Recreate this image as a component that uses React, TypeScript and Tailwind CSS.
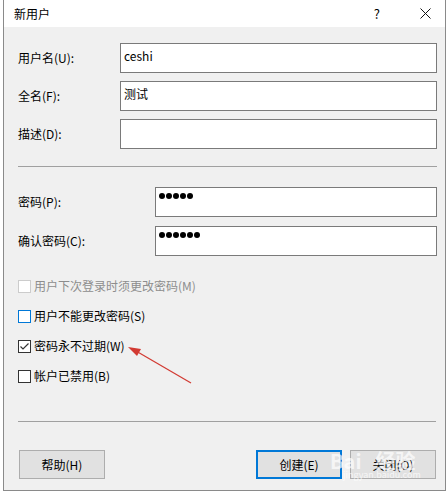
const font = { fontFamily: '"Noto Sans CJK SC", "Liberation Sans", sans-serif' }

function Field({ label, labelWidth, value, password }: { label: string; labelWidth: string; value?: string; password?: number }) {
  return (
    <div className="flex items-center h-[30px]">
      <div className={`${labelWidth} text-[12px] text-black leading-none`}>{label}</div>
      <div className="flex-1 h-[30px] border border-[#7a7a7a] bg-white px-[3px] pt-[4px] text-[12px] leading-[16px] text-black">
        {value}
        {password ? (
          <div className="flex gap-[1px] pt-[1px]">
            {Array.from({ length: password }).map((_, i) => (
              <span key={i} className="w-[6px] h-[6px] rounded-full bg-black" />
            ))}
          </div>
        ) : null}
      </div>
    </div>
  )
}

function Check({ label, checked, disabled, focus }: { label: string; checked?: boolean; disabled?: boolean; focus?: boolean }) {
  const box = disabled ? "border-[#cccccc]" : focus ? "border-[#0078d7]" : "border-[#333333]"
  return (
    <div className="flex items-center h-[16px]">
      <div className={`w-[13px] h-[13px] border ${box} bg-white flex items-center justify-center`}>
        {checked && (
          <svg width="11" height="11" viewBox="0 0 11 11">
            <path d="M1.5 5.5 L4 8 L9.5 2.5" fill="none" stroke="#333" strokeWidth="1.2" />
          </svg>
        )}
      </div>
      <span className={`ml-[3px] text-[12px] leading-none ${disabled ? "text-[#8d8d8d]" : "text-black"}`}>{label}</span>
    </div>
  )
}

export default function App() {
  return (
    <div className="relative w-[448px] h-[493px] bg-white overflow-hidden" style={font}>
      <div className="ml-[3px] w-[443px] h-[491px] border-l border-r border-b border-[#8a8a8a] flex flex-col">
        {/* title bar */}
        <div className="h-[27px] bg-white flex items-center pl-[10px]">
          <span className="text-[12px] text-black leading-none">新用户</span>
          <span className="ml-auto text-[13px] text-black leading-none mr-[40px]">?</span>
          <svg width="11" height="11" viewBox="0 0 11 11" className="mr-[14px]">
            <path d="M0.5 0.5 L10.5 10.5 M10.5 0.5 L0.5 10.5" stroke="#111" strokeWidth="1" />
          </svg>
        </div>

        <div className="flex-1 bg-[#f0f0f0] pl-[14px] pr-[8px] flex flex-col">
          <div className="mt-[16px] flex flex-col gap-[8px]">
            <Field label="用户名(U):" labelWidth="w-[102px]" value="ceshi" />
            <Field label="全名(F):" labelWidth="w-[102px]" value="测试" />
            <Field label="描述(D):" labelWidth="w-[102px]" />
          </div>

          <div className="mt-[17px] h-px bg-[#a0a0a0]" />

          <div className="mt-[20px] flex flex-col gap-[9px]">
            <Field label="密码(P):" labelWidth="w-[137px]" password={5} />
            <Field label="确认密码(C):" labelWidth="w-[137px]" password={6} />
          </div>

          <div className="mt-[22px] flex flex-col gap-[14px]">
            <Check label="用户下次登录时须更改密码(M)" disabled />
            <Check label="用户不能更改密码(S)" focus />
            <Check label="密码永不过期(W)" checked />
            <Check label="帐户已禁用(B)" />
          </div>

          <div className="mt-[37px] h-px bg-[#a0a0a0] mr-[1px]" />

          <div className="mt-[28px] flex items-center">
            <button className="ml-[1px] w-[86px] h-[29px] border border-[#adadad] bg-[#e1e1e1] text-[12px] text-black">帮助(H)</button>
            <button className="ml-auto w-[86px] h-[29px] border-2 border-[#0078d7] bg-[#e1e1e1] text-[12px] text-black">创建(E)</button>
            <button className="ml-[8px] mr-[1px] w-[86px] h-[29px] border border-[#adadad] bg-[#e1e1e1] text-[12px] text-black">关闭(O)</button>
          </div>
        </div>
      </div>

      {/* red annotation arrow */}
      <svg className="absolute left-0 top-0 pointer-events-none" width="448" height="493">
        <line x1="191" y1="383" x2="136" y2="351" stroke="#d23a32" strokeWidth="1.3" />
        <path d="M128 347 L141 349 L137 356 Z" fill="#d23a32" />
      </svg>

      {/* watermark */}
      <div className="absolute left-[330px] top-[451px] text-[20px] font-bold leading-none text-white/70 pointer-events-none">
        Bai<span className="ml-[14px]">经验</span>
      </div>
      <div className="absolute left-[343px] top-[470px] text-[9px] leading-none text-white/70 pointer-events-none">jingyan.baidu.com</div>
    </div>
  )
}
